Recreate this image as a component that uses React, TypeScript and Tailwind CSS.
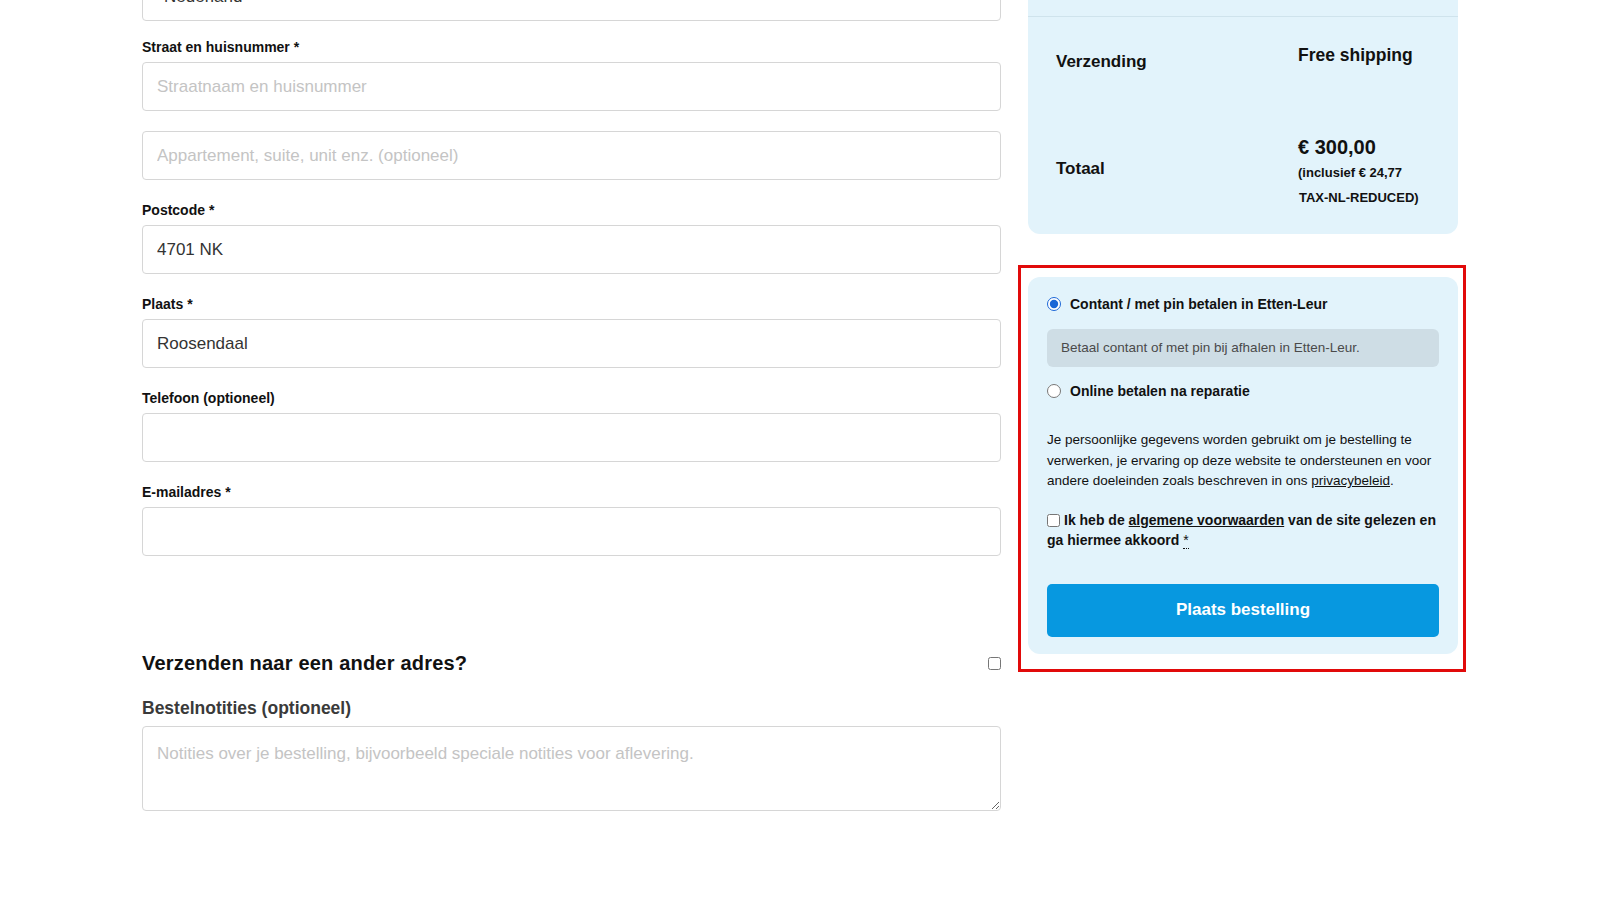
import React from "react";

const Field = ({ label, placeholder, value }: { label?: string; placeholder?: string; value?: string }) => (
  <div className="mb-[20px]">
    {label && (
      <label className="block text-[14px] leading-[20px] font-bold text-[#111] mb-[5px]">{label}</label>
    )}
    <input
      className="block w-full h-[49px] border border-[#d6d6d6] rounded-[4px] px-[14px] text-[17px] text-[#333] placeholder:text-[#c4c4c4] outline-none bg-white"
      type="text"
      placeholder={placeholder}
      defaultValue={value}
    />
  </div>
);

const App = () => {
  return (
    <div className="min-h-screen bg-white overflow-hidden font-['Liberation_Sans',Arial,sans-serif]">
      <div className="w-[1316px] mx-auto -mt-[53px] flex items-start gap-[27px]">
        {/* linker kolom: factuurgegevens */}
        <div className="w-[859px]">
          <div className="mb-[16px]">
            <label className="block text-[14px] leading-[20px] font-bold text-[#111] mb-[5px]">Land / Regio *</label>
            <div className="h-[49px] border border-[#d6d6d6] rounded-[4px] pl-[21px] flex items-center text-[17px] text-[#333]">
              Nederland
            </div>
          </div>
          <Field label="Straat en huisnummer *" placeholder="Straatnaam en huisnummer" />
          <Field placeholder="Appartement, suite, unit enz. (optioneel)" />
          <Field label="Postcode *" value="4701 NK" />
          <Field label="Plaats *" value="Roosendaal" />
          <Field label="Telefoon (optioneel)" />
          <Field label="E-mailadres *" />

          <div className="mt-[93px] flex items-center justify-between h-[28px]">
            <h3 className="text-[20px] leading-[28px] font-bold text-[#111] tracking-[0.2px]">
              Verzenden naar een ander adres?
            </h3>
            <input type="checkbox" className="w-[13px] h-[13px] mr-0" />
          </div>

          <label className="block mt-[19px] text-[17.5px] leading-[24px] font-bold text-[#3a3a3a]">
            Bestelnotities (optioneel)
          </label>
          <textarea
            className="block mt-[6px] w-full h-[85px] border border-[#d6d6d6] rounded-[4px] px-[14px] pt-[15px] text-[17px] leading-[24px] text-[#333] placeholder:text-[#c4c4c4] outline-none"
            placeholder="Notities over je bestelling, bijvoorbeeld speciale notities voor aflevering."
          />
        </div>

        {/* rechter kolom: overzicht + betalen */}
        <div className="w-[430px]">
          <div className="bg-[#e2f3fb] rounded-[12px] text-[#111]">
            <div className="h-[70px] border-b border-[#cfe3ec] px-[28px] grid grid-cols-[242px_1fr] items-center">
              <span className="text-[17px] font-bold">Subtotaal</span>
              <span className="text-[17px] font-bold">€ 300,00</span>
            </div>
            <div className="h-[93px] px-[28px] pt-[26px] grid grid-cols-[242px_1fr] items-start">
              <span className="mt-[7px] text-[17px] leading-[24px] font-bold">Verzending</span>
              <span className="text-[17.5px] leading-[24px] font-bold">Free shipping</span>
            </div>
            <div className="px-[28px] pt-[24px] pb-[24px] grid grid-cols-[242px_1fr] items-start">
              <span className="mt-[23px] text-[17px] leading-[24px] font-bold">Totaal</span>
              <div className="font-bold">
                <div className="text-[20px] leading-[26px]">€ 300,00</div>
                <div className="text-[13px] leading-[25px]">(inclusief € 24,77</div>
                <div className="text-[13px] leading-[25px] pl-[1px]">TAX-NL-REDUCED)</div>
              </div>
            </div>
          </div>

          <div className="relative mt-[43px]">
            <div className="bg-[#e2f3fb] rounded-[12px] px-[19px] pt-[17px] pb-[17px] text-[#111]">
              <label className="flex items-center h-[20px] text-[14px] font-bold">
                <input type="radio" name="betaal" defaultChecked className="w-[14px] h-[14px] m-0 accent-[#1a66d6]" />
                <span className="ml-[9px]">Contant / met pin betalen in Etten-Leur</span>
              </label>
              <div className="mt-[15px] h-[38px] rounded-[6px] bg-[#cedde5] px-[14px] flex items-center text-[13.5px] text-[#4a4a4a]">
                Betaal contant of met pin bij afhalen in Etten-Leur.
              </div>
              <label className="mt-[14px] flex items-center h-[20px] text-[14px] font-bold">
                <input type="radio" name="betaal" className="w-[14px] h-[14px] m-0" />
                <span className="ml-[9px]">Online betalen na reparatie</span>
              </label>

              <p className="mt-[29px] text-[13.5px] leading-[20.5px] text-[#111]">
                Je persoonlijke gegevens worden gebruikt om je bestelling te verwerken, je ervaring op deze website te
                ondersteunen en voor andere doeleinden zoals beschreven in ons{" "}
                <a className="underline">privacybeleid</a>.
              </p>

              <p className="mt-[18px] text-[14px] leading-[20px] font-bold">
                <input type="checkbox" className="w-[13px] h-[13px] m-0 mr-[4px] align-[-2px]" />
                Ik heb de <a className="underline">algemene voorwaarden</a> van de site gelezen en ga hiermee akkoord{" "}
                <abbr className="no-underline border-b border-dotted border-[#111] font-normal">*</abbr>
              </p>

              <button className="mt-[34px] w-full h-[53px] rounded-[5px] bg-[#0798e0] text-white text-[17px] font-bold">
                Plaats bestelling
              </button>
            </div>
            <div className="absolute -left-[10px] -right-[8px] -top-[12px] -bottom-[18px] border-[3px] border-[#e10a0a] pointer-events-none" />
          </div>
        </div>
      </div>
    </div>
  );
};

export default App;
